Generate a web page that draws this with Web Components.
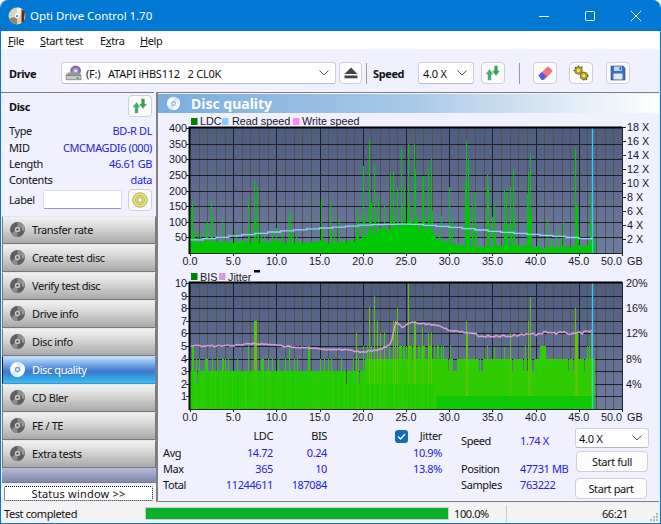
<!DOCTYPE html>
<html><head><meta charset="utf-8"><title>Opti Drive Control</title>
<style>html,body{margin:0;padding:0;background:#fff;overflow:hidden}body{width:661px;height:524px;font:11px "Noto Sans","Liberation Sans",sans-serif;letter-spacing:-.4px}</style>
</head><body>
<odc-window>
  <odc-titlebar slot="title">Opti Drive Control 1.70</odc-titlebar>
  <odc-menubar slot="menu"></odc-menubar>
  <odc-toolbar slot="tools"></odc-toolbar>
  <odc-sidebar slot="side"></odc-sidebar>
  <odc-quality slot="main"></odc-quality>
  <odc-statusbar slot="status"></odc-statusbar>
</odc-window>
<script>
const FONT='"Liberation Sans",Arial,sans-serif';
const discSvg=(c1,c2,c3)=>`<circle cx="8" cy="8" r="7" fill="${c1}"/><path d="M8 1a7 7 0 0 1 6 3.5L8 8z" fill="${c2}"/><path d="M8 15a7 7 0 0 1-6-3.500L8 8z" fill="${c2}"/><circle cx="8" cy="8" r="2.600" fill="${c3}"/><circle cx="8" cy="8" r="1.200" fill="${c1}"/>`;
const ICONS={
 app:`<circle cx="8" cy="8" r="7.500" fill="#d9d3b8"/><path d="M8 .5a7.500 7.500 0 0 1 7 5L8 8z" fill="#f4f1e2"/><path d="M8 15.500a7.500 7.500 0 0 1-7-5L8 8z" fill="#8d8672"/><path d="M12 2l3 2-1 9-2 1z" fill="#5c2a22"/><circle cx="8" cy="8" r="2.200" fill="#fff"/><circle cx="8" cy="8" r="1" fill="#777"/>`,
 drive:`<circle cx="10" cy="5.500" r="5" fill="#7d6aa8"/><circle cx="10" cy="5.500" r="3" fill="#a899cc"/><circle cx="10" cy="5.500" r="1.200" fill="#eee"/><path d="M1 9l2-2h10l2 2v5H1z" fill="#9a9a9a"/><rect x="1" y="10" width="14" height="4" fill="#c9c9c9" stroke="#666" stroke-width=".5"/><rect x="11" y="11.500" width="2" height="1.400" fill="#24b04c"/>`,
 eject:`<path d="M8 2.500l6.500 6.500h-13z" fill="#444"/><rect x="1.500" y="10.500" width="13" height="2.800" fill="#444"/>`,
 refresh:`<path d="M3 15V9H1L4.500 4.500 8 9H6v6z" fill="#2cb56c" stroke="#8a9a90" stroke-width=".5"/><path d="M9.500 1V6H7.500L11 10.500 14.500 6H12.500V1z" fill="#25a84a" stroke="#8a9a90" stroke-width=".5"/>`,
 eraser:`<path d="M1.500 10.500L9.500 2.500a2 2 0 0 1 3 0l2 2a2 2 0 0 1 0 3L7 15z" fill="#f0757d"/><path d="M1.500 10.500L5 7l4.500 4.500L6 15H4.500z" fill="#5a5ae0"/><path d="M9.500 2.500a2 2 0 0 1 3 0" stroke="#ffb4b4" fill="none"/>`,
 gears:`<g fill="#b8aa1e" stroke="#5f5810" stroke-width=".7"><circle cx="5.500" cy="5.500" r="3.800"/><circle cx="10.800" cy="10.800" r="3.800"/></g><circle cx="5.500" cy="5.500" r="1.400" fill="#f3ee9a"/><circle cx="10.800" cy="10.800" r="1.400" fill="#f3ee9a"/><g stroke="#5f5810" stroke-width="1.200"><path d="M5.500 .5v1.500M.5 5.500h1.500M9.500 1.500l-1 1M15.500 10.800H14M10.800 15.500V14M2 2l1 1M13 14l1 1"/></g>`,
 save:`<path d="M1 1h12l2 2v12H1z" fill="#3a6fc8" stroke="#1f4590" stroke-width=".6"/><rect x="4" y="1.500" width="8" height="4.500" fill="#c9d6ee"/><rect x="9.500" y="2" width="1.800" height="3.200" fill="#3a6fc8"/><rect x="3.500" y="8.500" width="9" height="6" fill="#e3e7ef"/>`,
 cd:`<circle cx="8" cy="8" r="7.300" fill="#e5e27e" stroke="#88864a" stroke-width=".6"/><circle cx="8" cy="8" r="4.500" fill="none" stroke="#bdb95a"/><circle cx="8" cy="8" r="2.400" fill="#fbfbe0" stroke="#7c7a40" stroke-width=".6"/>`,
 nav:`${discSvg('#5e5e5e','#8a8a8a','#c8c8c8')}<path d="M12 3l2.500 1.500v4l-2.500 1z" fill="#9a9a9a"/>`,
 navon:`${discSvg('#ffffff','#dfeaff','#6d9de0')}<path d="M12 3l2.500 1.500v4l-2.500 1z" fill="#fff"/>`,
 head:`${discSvg('#ffffff','#d6e6f6','#8fb8de')}<path d="M12 2.500l2.500 1.500v4l-2.500 1z" fill="#e8f2fb"/>`
};
function define(name,html,init){customElements.define(name,class extends HTMLElement{constructor(){super();this.attachShadow({mode:'open'}).innerHTML=html}connectedCallback(){if(init&&!this._i){this._i=1;init(this)}}})}

define('odc-icon',`<style>:host{display:inline-flex;width:var(--s,16px);height:var(--s,16px);flex:none}svg{width:100%;height:100%;display:block}</style><svg viewBox="0 0 16 16"></svg>`,
 e=>{const n=e.getAttribute('name');if(n)e.shadowRoot.querySelector('svg').innerHTML=ICONS[n]});

define('odc-window',`<style>:host{display:flex;flex-direction:column;width:661px;height:524px;box-sizing:border-box;background:#f0f0fe;border:1px solid #0078d4;border-top:0;border-radius:8px 8px 0 0;overflow:hidden;color:#111}
.m{display:flex;flex:none;height:411px}</style>
<slot name="title"></slot><slot name="menu"></slot><slot name="tools"></slot><div class="m"><slot name="side"></slot><slot name="main"></slot></div><slot name="status"></slot>`);

define('odc-titlebar',`<style>:host{display:flex;align-items:center;height:31px;flex:none;background:#0078d4;color:#fff;font-size:11.500px;letter-spacing:-.05px;box-sizing:border-box;padding-left:8px;margin:0 -1px}
odc-icon{--s:18px;margin-right:4px}.t{flex:1}
.c{width:46px;height:31px;display:flex;align-items:center;justify-content:center}svg{width:12px;height:12px;fill:none;stroke:#fff;stroke-width:1}</style>
<odc-icon name="app"></odc-icon><span class="t"><slot></slot></span>
<span class="c"><svg viewBox="0 0 12 12"><path d="M1 6.500h10"/></svg></span><span class="c"><svg viewBox="0 0 12 12"><rect x="1.500" y="1.500" width="9" height="9" rx="1"/></svg></span><span class="c" style="margin-right:2px"><svg viewBox="0 0 12 12"><path d="M1 1l10 10M11 1L1 11"/></svg></span>`);

define('odc-menubar',`<style>:host{display:flex;height:18px;flex:none;box-sizing:border-box;padding:2px 0 0 7px;background:#fff;align-items:center;line-height:16px}u{text-decoration:underline}span{white-space:nowrap;flex:none}</style>
<span style="width:32px"><u>F</u>ile</span><span style="width:60px"><u>S</u>tart test</span><span style="width:40px">E<u>x</u>tra</span><span><u>H</u>elp</span>`);

define('odc-btn',`<style>:host{display:inline-flex;align-items:center;justify-content:center;box-sizing:border-box;border:1px solid #cfcfd6;border-radius:4px;background:#fcfcfc;flex:none;color:#111}</style><slot></slot>`);

define('odc-combo',`<style>:host{display:flex;align-items:center;box-sizing:border-box;border:1px solid #d0d0d6;border-bottom-color:#b8b8c0;border-radius:3px;background:#fff;height:22px;padding:0 6px 0 3px;flex:none;white-space:pre;letter-spacing:-.25px}
.g{flex:1;display:flex;align-items:center;gap:4px;min-width:0}svg{width:10px;height:6px;fill:none;stroke:#555;stroke-width:1;flex:none}</style>
<span class="g"><slot></slot></span><svg viewBox="0 0 10 6"><path d="M.5.500L5 5l4.500-4.500"/></svg>`);

define('odc-toolbar',`<style>:host{display:flex;align-items:center;height:43px;flex:none;box-sizing:border-box;padding:5px 0 0 8px;background:#f0f0fe}
b{font-weight:700}.sep{width:1px;height:21px;background:#9a9a9a;flex:none}
odc-btn{height:22px}</style>
<b style="width:52px">Drive</b>
<odc-combo style="width:275px"><odc-icon name="drive" style="--s:17px"></odc-icon><span>(F:)   ATAPI iHBS112   2 CL0K</span></odc-combo>
<odc-btn style="width:23px;margin-left:3px"><odc-icon name="eject"></odc-icon></odc-btn>
<span class="sep" style="margin:0 6px 0 4px"></span><b style="width:45px">Speed</b>
<odc-combo style="width:56px;padding-left:4px">4.0 X</odc-combo>
<odc-btn style="width:24px;margin-left:7px"><odc-icon name="refresh"></odc-icon></odc-btn>
<span class="sep" style="margin:0 13px 0 14px"></span>
<odc-btn style="width:24px"><odc-icon name="eraser"></odc-icon></odc-btn>
<odc-btn style="width:24px;margin-left:12px"><odc-icon name="gears"></odc-icon></odc-btn>
<odc-btn style="width:24px;margin-left:13px"><odc-icon name="save"></odc-icon></odc-btn>`);

define('odc-nav',`<style>:host{display:flex;align-items:center;height:28px;box-sizing:border-box;padding:0 0 2px 6px;gap:6px;color:#111;border:1px solid #8c8c8c;border-color:#e6e6e6 #777 #777 #777;background:linear-gradient(#f1f1f1 0,#dcdcdc 35%,#c8c8c8 60%,#a9a9a9 100%)}
:host([on]){color:#fff;background:linear-gradient(#c4def9 0,#7fb0ec 25%,#3d78cc 55%,#35a5e4 85%,#2bc6f5 100%);border-color:#bcd8f6 #5a86c0 #5a86c0 #111}
odc-icon{--s:17px}</style><odc-icon></odc-icon><span><slot></slot></span>`,
 e=>{const ic=e.shadowRoot.querySelector('odc-icon');ic.shadowRoot.querySelector('svg').innerHTML=ICONS[e.hasAttribute('on')?'navon':'nav']});

define('odc-sidebar',`<style>:host{display:flex;flex-direction:column;width:155px;flex:none;background:#f0f0fe}
.disc{height:124px;box-sizing:border-box;border-top:1px solid #808080;margin-right:2px;padding:2px 2px 0 8px;display:flex;flex-direction:column}
.h{display:flex;justify-content:space-between;align-items:center;height:22px;font-weight:700;margin-bottom:6px}
.r{display:flex;justify-content:space-between;height:16.400px;line-height:16px;align-items:center;white-space:nowrap}.r i{font-style:normal;color:#2222e6}
.l{display:flex;align-items:center;height:22px}.in{width:79px;height:19px;box-sizing:border-box;margin:0 6px 0 auto;background:#fff;border:1px solid #dcdce2;border-bottom-color:#9a9aa0;border-radius:2px}
odc-btn{width:24px;height:22px}.nv{display:flex;flex-direction:column;margin-left:1px}
.f{height:14px;margin-left:1px;background:linear-gradient(#b9bdd8,#7f86ac);border-bottom:1px solid #808080;box-sizing:content-box}
.s{margin:3px 3px 0 3px;height:15px;box-sizing:border-box;border:1px dotted #111;background:#fff;border-radius:2px;text-align:center;line-height:13px;letter-spacing:.2px}</style>
<div class="disc"><div class="h">Disc<odc-btn><odc-icon name="refresh"></odc-icon></odc-btn></div>
<div class="r">Type<i>BD-R DL</i></div><div class="r">MID<i>CMCMAGDI6 (000)</i></div><div class="r">Length<i>46.61 GB</i></div><div class="r">Contents<i>data</i></div>
<div class="l">Label<span class="in"></span><odc-btn><odc-icon name="cd"></odc-icon></odc-btn></div></div>
<div class="nv"><odc-nav>Transfer rate</odc-nav><odc-nav>Create test disc</odc-nav><odc-nav>Verify test disc</odc-nav><odc-nav>Drive info</odc-nav><odc-nav>Disc info</odc-nav><odc-nav on>Disc quality</odc-nav><odc-nav>CD Bler</odc-nav><odc-nav>FE / TE</odc-nav><odc-nav>Extra tests</odc-nav></div>
<div class="f"></div><div class="s">Status window &gt;&gt;</div>`);

// ---------- charts ----------
function rng(s){return()=>(s=(s*1664525+1013904223)>>>0)/4294967296}
const PX=8.64,PW=432;
function interp(t,x){for(let i=1;i<t.length;i++)if(x<=t[i][0]){const a=t[i-1],b=t[i];return a[1]+(b[1]-a[1])*(x-a[0])/(b[0]-a[0])}return t[t.length-1][1]}
function grid(id,x0,y0,h,n){let s=`<defs><linearGradient id="${id}" x1="0" y1="0" x2="0" y2="1"><stop offset="0" stop-color="#4e5c7e"/><stop offset="1" stop-color="#6d7ca0"/></linearGradient></defs><rect x="${x0}" y="${y0}" width="${PW}" height="${h}" fill="url(#${id})"/>`;
 for(let i=1;i<50;i++){if(i%5)s+=`<path d="M${x0+Math.round(i*PX)+.5} ${y0}v${h}" stroke="#56524f" stroke-width="1"/>`}
 for(let i=1;i<n;i++){s+=`<path d="M${x0} ${Math.round(y0+i*h/n)+.5}h${PW}" stroke="#1e2026" stroke-width="1"/>`}
 for(let i=5;i<50;i+=5){s+=`<path d="M${x0+Math.round(i*PX)+.5} ${y0}v${h}" stroke="#1e2026" stroke-width="1"/>`}
 return s}
function frame(x0,y0,h){return `<path d="M${x0-.5} ${y0+h+1}V${y0-.5}H${x0+PW+.5}" fill="none" stroke="#000" stroke-width="2"/><path d="M${x0} ${y0+h+.5}h${PW}M${x0+PW+.5} ${y0}v${h+1}" stroke="#222"/>`}
function xlabels(x0,y,tickY){let s='';for(let i=0;i<=10;i++){const x=x0+i*43.2;s+=`<text x="${x}" y="${y}" text-anchor="${i==10?'end':'middle'}">${(i*5).toFixed(1)}</text><path d="M${Math.round(x)+.5} ${tickY}v3" stroke="#222"/>`}
 s+=`<text x="${x0+PW+5}" y="${y}">GB</text>`;return s}
function legend(items,y,o){return items.map(([x,c,t,tx])=>`<rect x="${x}" y="${y-6}" width="6.500" height="7" fill="${c}"/><text x="${tx}" y="${y+o}">${t}</text>`).join('')}

function chart1(){const X=32,Y=15,H=125,r=rng(77);
 const peaks=[[.2,165],[.1,140],[.9,70],[1.8,95],[2,100],[2.4,170],[2.6,115],[3.7,100],[5.3,70],[6.7,180],[7.4,235],[7.7,215],[8.2,60],[9.5,75],[10,80],[10.6,62],[11.4,120],[11.6,135],[12.3,62],[15.2,175],[16.2,165],[16.7,75],[17.3,115],[19.2,140],[19.4,115],[20,280],[20.7,365],[20.9,160],[21.3,285],[21.8,180],[22.5,150],[23.2,255],[23.5,260],[24,210],[24.4,340],[24.8,210],[25.2,350],[25.9,350],[26,270],[26.8,240],[27,245],[27.5,270],[27.9,300],[29,120],[30,210],[30.3,110],[31.8,230],[32,360],[32.2,300],[32.6,155],[33,195],[34.4,250],[34.5,215],[34.9,115],[35.2,155],[36.3,205],[36.6,195],[37,210],[37.4,270],[39,190],[39.1,260],[39.3,320],[41.3,105],[42.4,75],[43.2,100],[44.6,335],[44.8,150],[46.3,100],[46.4,195]];
 const base=[[0,32],[18,32],[20,45],[22,62],[24,85],[27.8,75],[28.5,42],[31,26],[33,20],[38,22],[40,15],[44,18],[46,22],[46.8,45]];
 const col=new Array(405).fill(0);
 for(let i=0;i<405;i++){const g=i/PX;let v=interp(base,g)*(.85+r()*.45);if(r()<.1)v+=r()*26;col[i]=v}
 peaks.forEach(([g,v])=>{const i=Math.round(g*PX);if(i<405)col[i]=Math.max(col[i],v);if(v>120&&i+1<405)col[i+1]=Math.max(col[i+1],v*.45)});
 const sc=H/400;let d='';col.forEach((v,i)=>{d+=`M${X+i+.5} ${Y+H}V${(Y+H-v*sc).toFixed(1)}`});
 const sp=[[0,42],[5,56],[10,70],[15,80],[20,90],[25,93],[30,82],[35,68],[40,58],[46.6,42]];
 let l=`M${X} ${Y+H-42*sc}`;for(let g=0;g<=46.6;g+=1.5){l+=`H${X+g*PX}V${(Y+H-interp(sp,g)*sc).toFixed(1)}`}
 let s=grid('g1',X,Y,H,8)+`<path d="${d}" stroke="#00c800" stroke-width="1" fill="none" shape-rendering="crispEdges"/><path d="${l}" stroke="#8fd0f8" stroke-width="1.300" fill="none"/><path d="M${X+402.5} ${Y}v${H}" stroke="#2fd0f0" stroke-width="1.300"/>`+frame(X,Y,H);
 for(let i=1;i<=8;i++){const y=Y+H-i*H/8;s+=`<text x="29" y="${y+4}" text-anchor="end">${i*50}</text><path d="M${X-4} ${Math.round(y)+.5}h3" stroke="#222"/>`}
 for(let i=1;i<=9;i++){const y=Y+H-i*14;s+=`<text x="${X+PW+5}" y="${y+4}">${i*2} X</text><path d="M${X+PW} ${Math.round(y)+.5}h4" stroke="#222"/>`}
 s+=xlabels(X,151.500,Y+H)+legend([[33,'#008000','LDC',42],[64,'#88ccff','Read speed',74],[135,'#ff88ee','Write speed',144]],11,1);
 return s}

function chart2(){const X=32,Y=11,H=126,r=rng(1234),u=H/10;
 const n=405,val=new Array(n);
 for(let i=0;i<n;i++){const g=i/PX;let v=3;
  if(g>20.2)v=4; if(g>=24&&g<28)v=r()<.5?5:4; if(g>=28&&r()<.1)v=3; if(g>28&&g<31&&r()<.18)v=5; if(g>40.5&&g<41.2)v=5; if(g>18&&g<20.2&&r()<.2)v=4; val[i]=v}
 const sp=[[.2,5],[.3,5],[.7,4],[1,4],[1.7,4],[1.8,4],[1.9,4],[2,4],[2.6,4],[3.1,4],[3.7,4],[3.8,4],[4,4],[4.4,4],[5.4,4],[6.7,5],[7.4,7],[7.5,7],[7.6,7],[8.2,4],[8.3,4],[8.5,4],[9,4],[9.5,4],[10.2,4],[11,4],[11.5,5],[12,4],[12.4,4],[13.6,5],[13.7,5],[13.8,5],[15,4],[15.5,4],[16,4],[16.3,4],[17.5,4],[19.2,6],[20,5],[20.7,8],[20.5,5],[20.9,5],[21.3,9],[21.6,7],[22,6],[22.5,6],[23,5],[23.5,7],[23.7,7],[24,8],[24.3,5],[24.6,5],[25.2,10],[25.9,7],[26,7],[26.8,6.500],[27.5,6],[27.9,6],[32,7],[32.1,6],[34.4,5],[35.2,4.900],[36.4,4.900],[37,6],[38.8,5],[39.1,7],[39.3,8.900],[39.4,7],[44.6,8],[44.7,6],[44.8,6],[46,5],[46.2,5],[46.4,6]];
 const lime=new Set();sp.forEach(([g,v])=>{const i=Math.round(g*PX);if(i<n){val[i]=Math.max(val[i],v);if(v>=6)lime.add(i)}});
 [[.85,2],[18.1,2],[19.6,2],[33.8,3],[37.3,3],[39.7,3]].forEach(([g,v])=>val[Math.round(g*PX)]=v);
 let s=grid('g2',X,Y,H,10),lo={},hi='',li='';
 val.forEach((v,i)=>{const x=X+i+.5,b=Y+H,m=b-u*(i>245?1:(i>175?2:v));const c=i>245?'#10c800':['#1ccc00','#26cc00','#2ecc00','#22cc00'][Math.floor(r()*4)];
  lo[c]=(lo[c]||'')+`M${x} ${b}V${Math.max(m,b-u*Math.min(v,3)).toFixed(1)}`;
  const top=(b-u*v).toFixed(1),st=Math.max(m,b-u*Math.min(v,3)).toFixed(1);
  if(lime.has(i)){li+=`M${x} ${st}V${top}`}else if(+top<+st)hi+=`M${x} ${st}V${top}`});
 s+=`<path d="${hi}" stroke="#2ecc00" fill="none" shape-rendering="crispEdges"/><path d="${li}" stroke="#5cc400" fill="none" shape-rendering="crispEdges"/>`;
 for(const c in lo)s+=`<path d="${lo[c]}" stroke="${c}" fill="none" shape-rendering="crispEdges"/>`;
 const jt=[[0,5],[4,5],[7.5,5.200],[10,5.050],[14,4.800],[18,4.700],[20,4.520],[22,4.700],[23.300,5.200],[23.800,6.900],[24.600,6.500],[25.500,6.900],[29,6.600],[30,6.250],[33,5.950],[33.500,5.750],[40,5.900],[41,6.050],[45,6],[46.600,6.200]];
 let l='';for(let i=0;i<=402;i+=2){const g=i/PX,v=interp(jt,g)+(r()-.5)*(g>33?.22:.12);l+=(i?'L':'M')+(X+i)+' '+(Y+H-u*v).toFixed(1)}
 s+=`<path d="${l}" stroke="#cf9fd0" stroke-width="1.600" fill="none"/><path d="M${X+402.5} ${Y}v${H}" stroke="#2fd0f0" stroke-width="1.300"/>`+frame(X,Y,H);
 for(let i=1;i<=10;i++){const y=Y+H-i*u;s+=`<text x="29" y="${y+4}" text-anchor="end">${i}</text><path d="M${X-4} ${Math.round(y)+.5}h3" stroke="#222"/>`}
 for(let i=1;i<=5;i++){const y=Y+H-i*2*u;s+=`<text x="${X+PW+4}" y="${y+4}">${i*4}%</text>`}
 s+=xlabels(X,148.500,Y+H)+legend([[33,'#008000','BIS',42],[61,'#d0a0d0','Jitter',70]],7,1.500)+`<rect x="96" y="-2" width="6" height="2.500" fill="#000"/>`;
 return s}

define('odc-chart',`<style>:host{display:block}svg{display:block;overflow:visible;font:10.800px ${FONT};fill:#161628}text{letter-spacing:0}</style><svg width="501"></svg>`,
 e=>{const sv=e.shadowRoot.querySelector('svg'),h=e.getAttribute('h');sv.setAttribute('height',h);sv.setAttribute('viewBox',`0 0 501 ${h}`);sv.innerHTML=e.getAttribute('kind')==='1'?chart1():chart2()});

define('odc-stats',`<style>:host{display:flex;height:76px;box-sizing:border-box;padding-top:3px;white-space:nowrap}
i{font-style:normal;color:#2222e6}
.t{display:grid;grid-template-columns:50px 60px 54px;grid-auto-rows:16px;width:164px;margin-left:5px;text-align:right;align-content:start;line-height:16px}.t span:nth-child(3n+1){text-align:left}
.j{width:47px;margin-left:68px;text-align:right;line-height:16px}.j div{height:16px}.j .c{display:flex;justify-content:space-between;align-items:center;height:16px}
.ck{width:13px;height:13px;background:#0f6cbd;border-radius:3px;display:flex;align-items:center;justify-content:center}.ck svg{width:9px;height:9px;fill:none;stroke:#fff;stroke-width:1.300}
.s{width:114px;margin-left:19px;display:grid;grid-template-columns:59px 1fr;grid-template-rows:28px 16px 16px;align-content:start;line-height:16px;padding-top:5px}
.b{display:flex;flex-direction:column;align-items:flex-start}.b odc-btn{height:21px}</style>
<div class="t"><span></span><span>LDC</span><span>BIS</span><span style="margin-top:1px">Avg</span><i style="margin-top:1px">14.72</i><i style="margin-top:1px">0.24</i><span style="margin-top:1px">Max</span><i style="margin-top:1px">365</i><i style="margin-top:1px">10</i><span style="margin-top:1px">Total</span><i style="margin-top:1px">11244611</i><i style="margin-top:1px">187084</i></div>
<div class="j"><div class="c"><span class="ck"><svg viewBox="0 0 9 9"><path d="M1 4.500l2.500 2.500L8 2"/></svg></span>Jitter</div><div style="margin-top:1px"><i>10.9%</i></div><div><i>13.8%</i></div></div>
<div class="s"><span>Speed</span><i>1.74 X</i><span>Position</span><i>47731 MB</i><span>Samples</span><i>763222</i></div>
<div class="b"><odc-combo style="width:74px;height:20px">4.0 X</odc-combo><odc-btn style="width:72px;margin:3px 0 0 1px">Start full</odc-btn><odc-btn style="width:72px;margin-top:6px">Start part</odc-btn></div>`);

define('odc-quality',`<style>:host{display:flex;flex-direction:column;width:503px;flex:none;box-sizing:border-box;border:solid #808080;border-width:1px 0 1px 2px;height:410px;background:#f0f0fe}
.h{height:19px;margin-top:1px;background:linear-gradient(90deg,#79aedd 0,#a8c8e6 50%,#ffffff 100%);display:flex;align-items:center;padding-left:8px;color:#fff;font-weight:700;font-size:14px;letter-spacing:0;gap:10px;flex:none}odc-icon{--s:15px}</style>
<div class="h"><odc-icon name="head"></odc-icon><span>Disc quality</span></div>
<odc-chart kind="1" h="159"></odc-chart><odc-chart kind="2" h="153"></odc-chart><odc-stats></odc-stats>`);

define('odc-statusbar',`<style>:host{display:flex;align-items:center;height:19px;flex:none;background:#f3f3f3;box-sizing:border-box;padding:2px 0 0 3px;white-space:nowrap}
.p{width:302px;height:11px;background:#0aaf2a;outline:1px solid #cfcfcf;flex:none}
.v{width:59px;padding-left:6px;box-sizing:border-box;border-right:1px solid #c8c8c8;height:17px;line-height:17px;flex:none}.tm{width:121px;text-align:right;flex:none;box-sizing:border-box}
svg{width:10px;height:10px;margin:auto 1px 0 auto;flex:none;fill:#b8b8b8}</style>
<span style="width:142px;flex:none">Test completed</span><span class="p"></span><span class="v">100.0%</span><span class="tm">66:21</span>
<svg viewBox="0 0 10 10"><rect x="7" y="1" width="2" height="2"/><rect x="4" y="4" width="2" height="2"/><rect x="7" y="4" width="2" height="2"/><rect x="1" y="7" width="2" height="2"/><rect x="4" y="7" width="2" height="2"/><rect x="7" y="7" width="2" height="2"/></svg>`);
</script>
</body></html>
